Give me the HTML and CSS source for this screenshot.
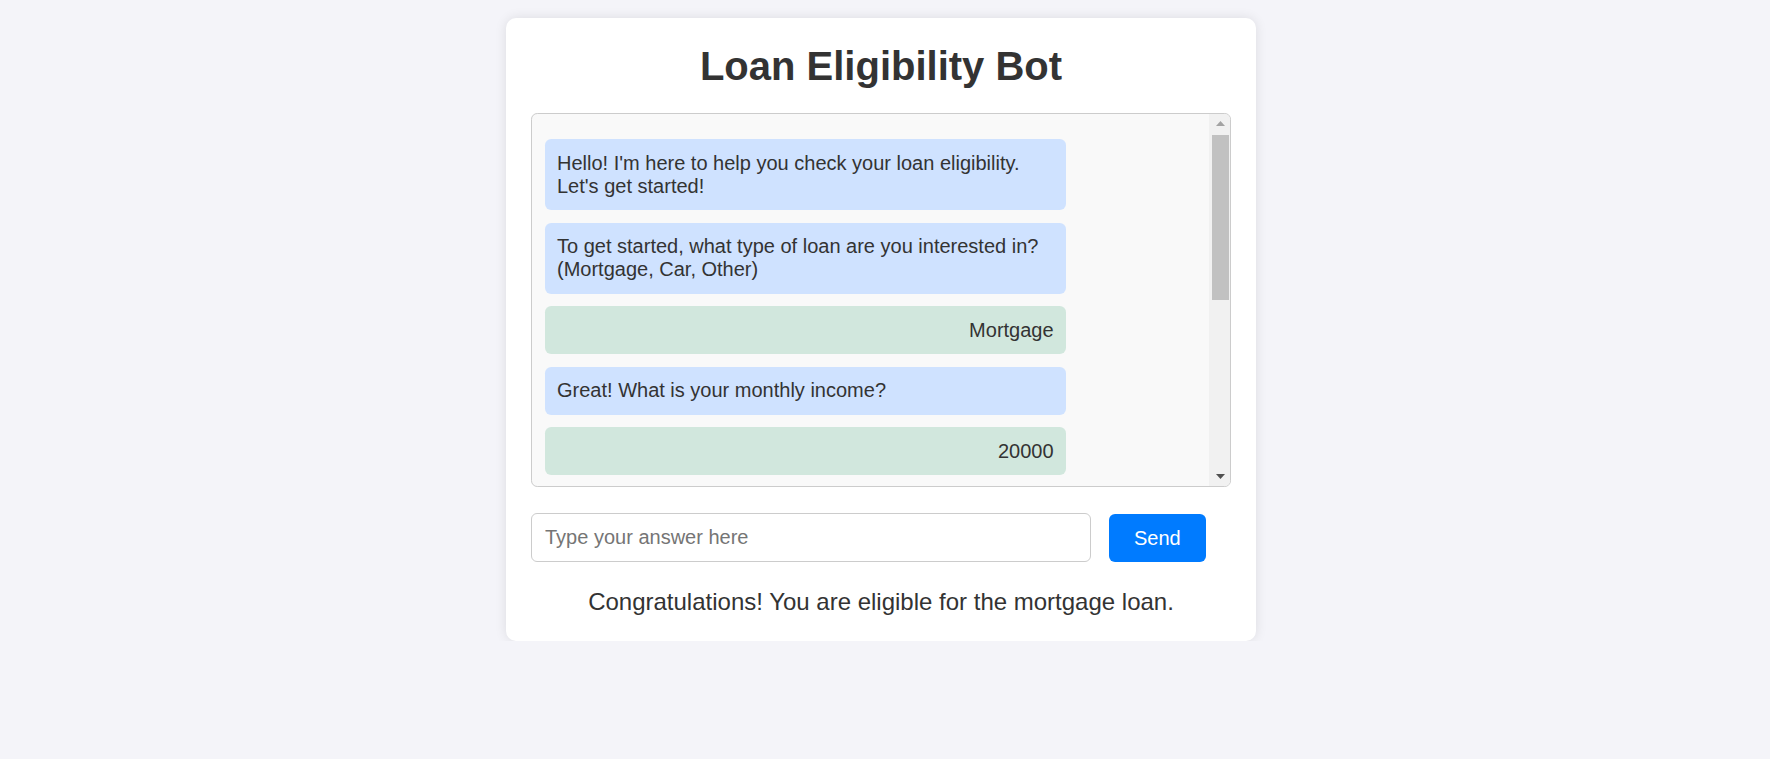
FILE: index.html
```html
<!DOCTYPE html>
<html lang="en">
<head>
<meta charset="utf-8">
<title>Loan Eligibility Bot</title>
<link rel="stylesheet" href="styles.css">
</head>
<body>
  <div class="card">
    <h1 class="title">Loan Eligibility Bot</h1>
    <div class="chat">
      <div class="messages">
        <div class="msg bot">Hello! I'm here to help you check your loan eligibility. Let's get started!</div>
        <div class="msg bot">To get started, what type of loan are you interested in? (Mortgage, Car, Other)</div>
        <div class="msg user">Mortgage</div>
        <div class="msg bot">Great! What is your monthly income?</div>
        <div class="msg user">20000</div>
      </div>
      <div class="scrollbar">
        <div class="sb-btn">
          <svg width="9" height="5" viewBox="0 0 9 5"><polygon points="4.5,0 9,5 0,5" fill="#a3a3a3"/></svg>
        </div>
        <div class="sb-track">
          <div class="sb-thumb"></div>
        </div>
        <div class="sb-btn">
          <svg width="9" height="5" viewBox="0 0 9 5"><polygon points="0,0 9,0 4.5,5" fill="#505050"/></svg>
        </div>
      </div>
    </div>
    <div class="input-row">
      <input class="answer" type="text" placeholder="Type your answer here">
      <button class="send" type="button">Send</button>
    </div>
    <div class="result">Congratulations! You are eligible for the mortgage loan.</div>
  </div>
</body>
</html>
```

FILE: styles.css
```css
html, body {
  margin: 0;
  padding: 0;
}

body {
  background: #f4f4f9;
  font-family: "Liberation Sans", Arial, sans-serif;
  color: #333;
  padding: 18px 8px 0 0;
}

.card {
  width: 700px;
  margin: 0 auto;
  padding: 25px 25px 26px;
  background: #fff;
  border-radius: 10px;
  box-shadow: 0 0 12px rgba(0, 0, 0, 0.1);
}

.title {
  margin: 0 0 24px;
  font-size: 40px;
  line-height: 46px;
  font-weight: bold;
  text-align: center;
  color: #333;
}

.chat {
  box-sizing: border-box;
  display: flex;
  height: 374px;
  border: 1.25px solid #ccc;
  border-radius: 6.25px;
  background: #f9f9f9;
  overflow: hidden;
}

.messages {
  flex: 1;
  min-width: 0;
  padding: 12.5px;
  overflow: hidden;
}

.scrollbar {
  width: 21px;
  flex: none;
  display: flex;
  flex-direction: column;
  background: #f1f1f1;
}

.sb-btn {
  height: 19px;
  flex: none;
  display: flex;
  align-items: center;
  justify-content: center;
  padding-left: 1px;
}

.sb-track {
  flex: 1;
  padding: 2px 1px 0 3px;
}

.sb-thumb {
  height: 165px;
  background: #c1c1c1;
}

.msg {
  width: 80%;
  box-sizing: border-box;
  margin: 12.5px 0;
  padding: 12.5px;
  border-radius: 6.25px;
  font-size: 20px;
  line-height: 23px;
  color: #333;
}

.bot {
  background: #cfe2ff;
}

.user {
  background: #d1e7dd;
  text-align: right;
}

.input-row {
  display: flex;
  align-items: flex-start;
  gap: 18px;
  margin-top: 26px;
}

.answer {
  box-sizing: border-box;
  width: 560px;
  height: 49px;
  margin: 0;
  padding: 0 13px;
  border: 1.25px solid #ccc;
  border-radius: 6px;
  font-family: "Liberation Sans", Arial, sans-serif;
  font-size: 20px;
  color: #333;
  background: #fff;
}

.answer::placeholder {
  color: #757575;
}

.send {
  box-sizing: border-box;
  height: 48px;
  margin-top: 1px;
  padding: 0 25px;
  border: none;
  border-radius: 6px;
  background: #007bff;
  color: #fff;
  font-family: "Liberation Sans", Arial, sans-serif;
  font-size: 20px;
  line-height: 23px;
}

.result {
  margin-top: 25.5px;
  text-align: center;
  font-size: 24px;
  line-height: 27.6px;
  color: #333;
}
```
